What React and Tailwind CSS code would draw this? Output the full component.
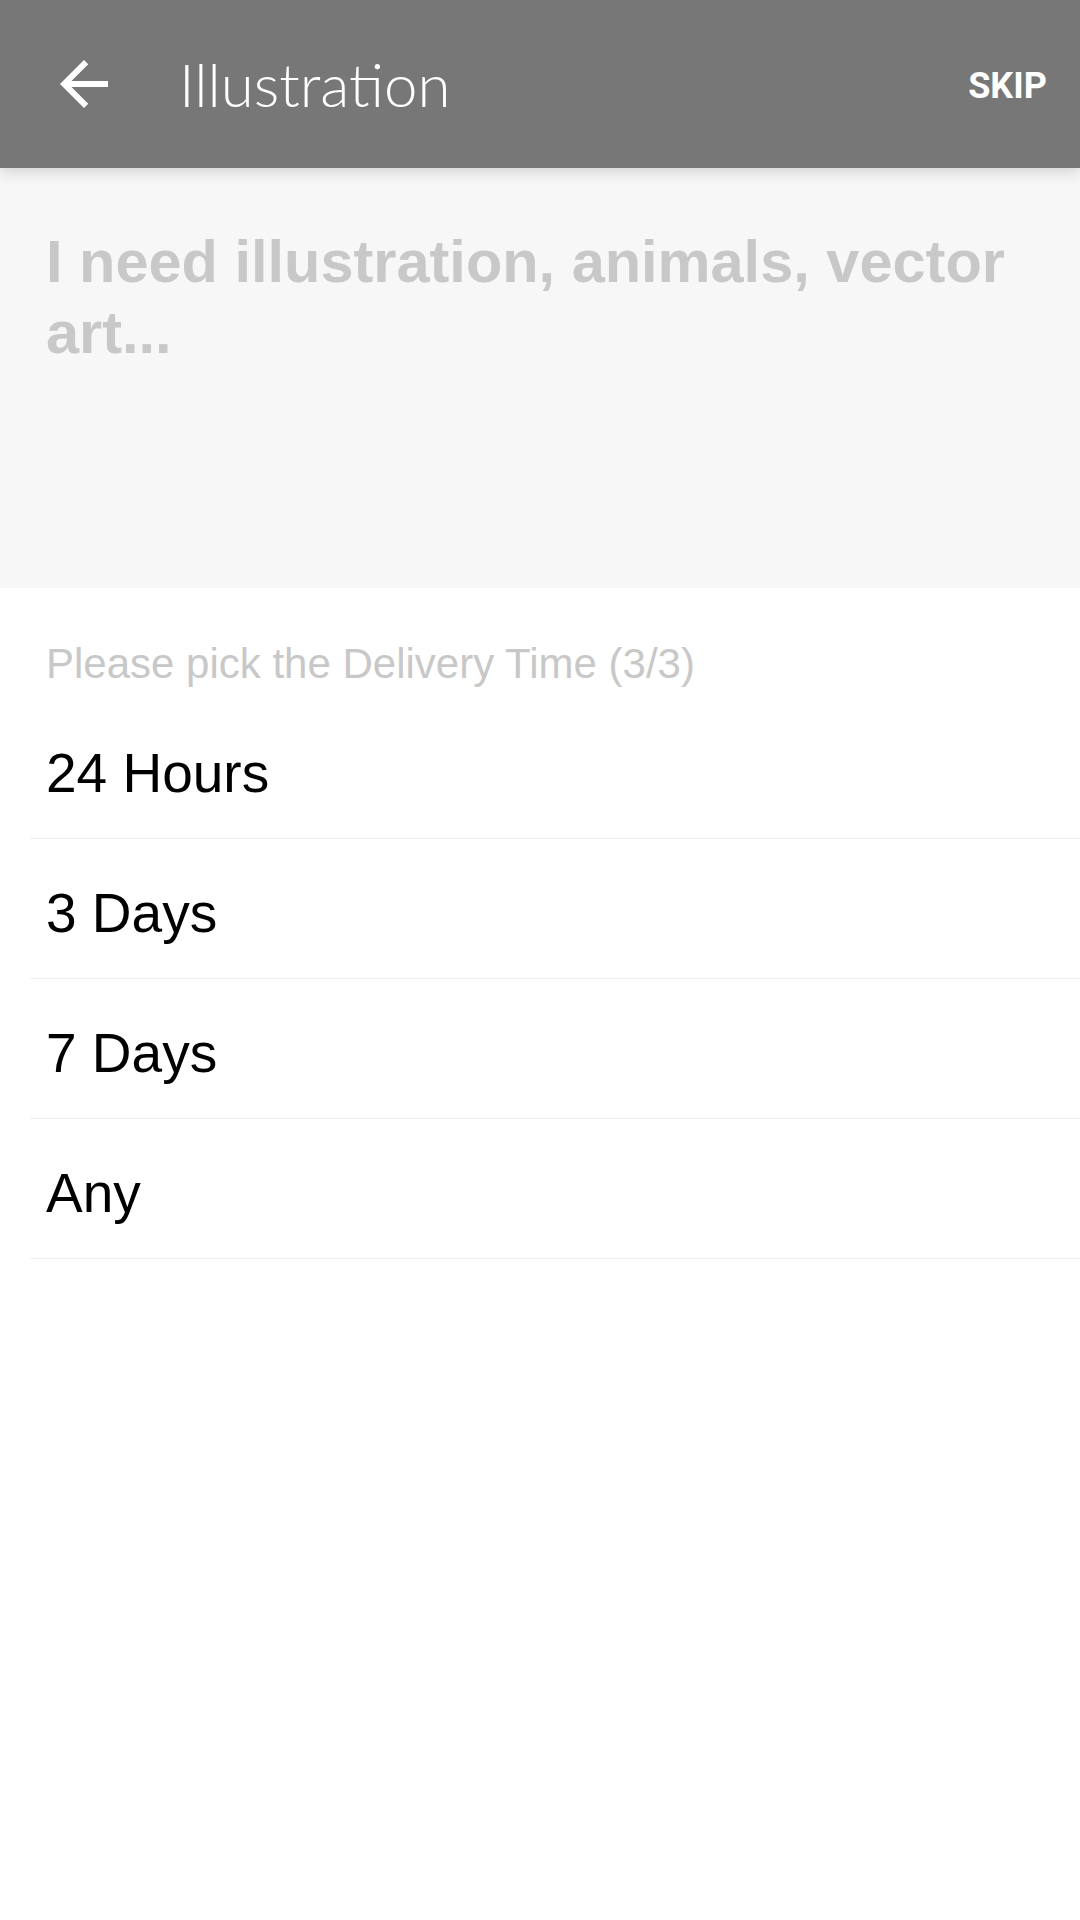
import React from 'react';

const options = ['24 Hours', '3 Days', '7 Days', 'Any'];

const App = () => {
  return (
    <div className="min-h-[1920px] w-[1080px] bg-white" style={{ fontFamily: '"Liberation Sans", Arial, sans-serif' }}>
      {/* Toolbar */}
      <div className="relative z-10 flex h-[168px] items-center bg-[#777777] shadow-[0_6px_12px_rgba(0,0,0,0.12)]">
        <button className="ml-[48px] flex h-[72px] w-[72px] items-center justify-center">
          <svg viewBox="0 0 24 24" className="h-[72px] w-[72px]" fill="#ffffff">
            <path d="M20 11H7.83l5.59-5.59L12 4l-8 8 8 8 1.41-1.41L7.83 13H20v-2z" />
          </svg>
        </button>
        <h1 className="ml-[59px] flex-1 text-[60px] font-light leading-none text-white" style={{ fontFamily: 'Lato, "Open Sans", sans-serif' }}>
          Illustration
        </h1>
        <button className="mr-[33px] mt-[4px] text-[36px] font-bold leading-none text-white" style={{ fontFamily: 'Roboto, sans-serif' }}>
          SKIP
        </button>
      </div>

      {/* Request input */}
      <div className="h-[420px] bg-[#f7f7f7] px-[46px] pt-[58px]">
        <p className="text-[59.5px] font-bold leading-[71px] text-[#c8c8c8]">
          I need illustration, animals, vector art...
        </p>
      </div>

      {/* Delivery options */}
      <div className="pt-[52px]">
        <p className="px-[46px] text-[42px] leading-[48px] text-[#c8c8c8]">
          Please pick the Delivery Time (3/3)
        </p>
        <ul className="mt-[11px] ml-[30px]">
          {options.map((opt) => (
            <li key={opt} className="h-[140px] border-b border-[#eeeeee] pl-[16px] pt-[47px]">
              <span className="block text-[55px] leading-[55px] text-black">{opt}</span>
            </li>
          ))}
        </ul>
      </div>
    </div>
  );
};

export default App;
